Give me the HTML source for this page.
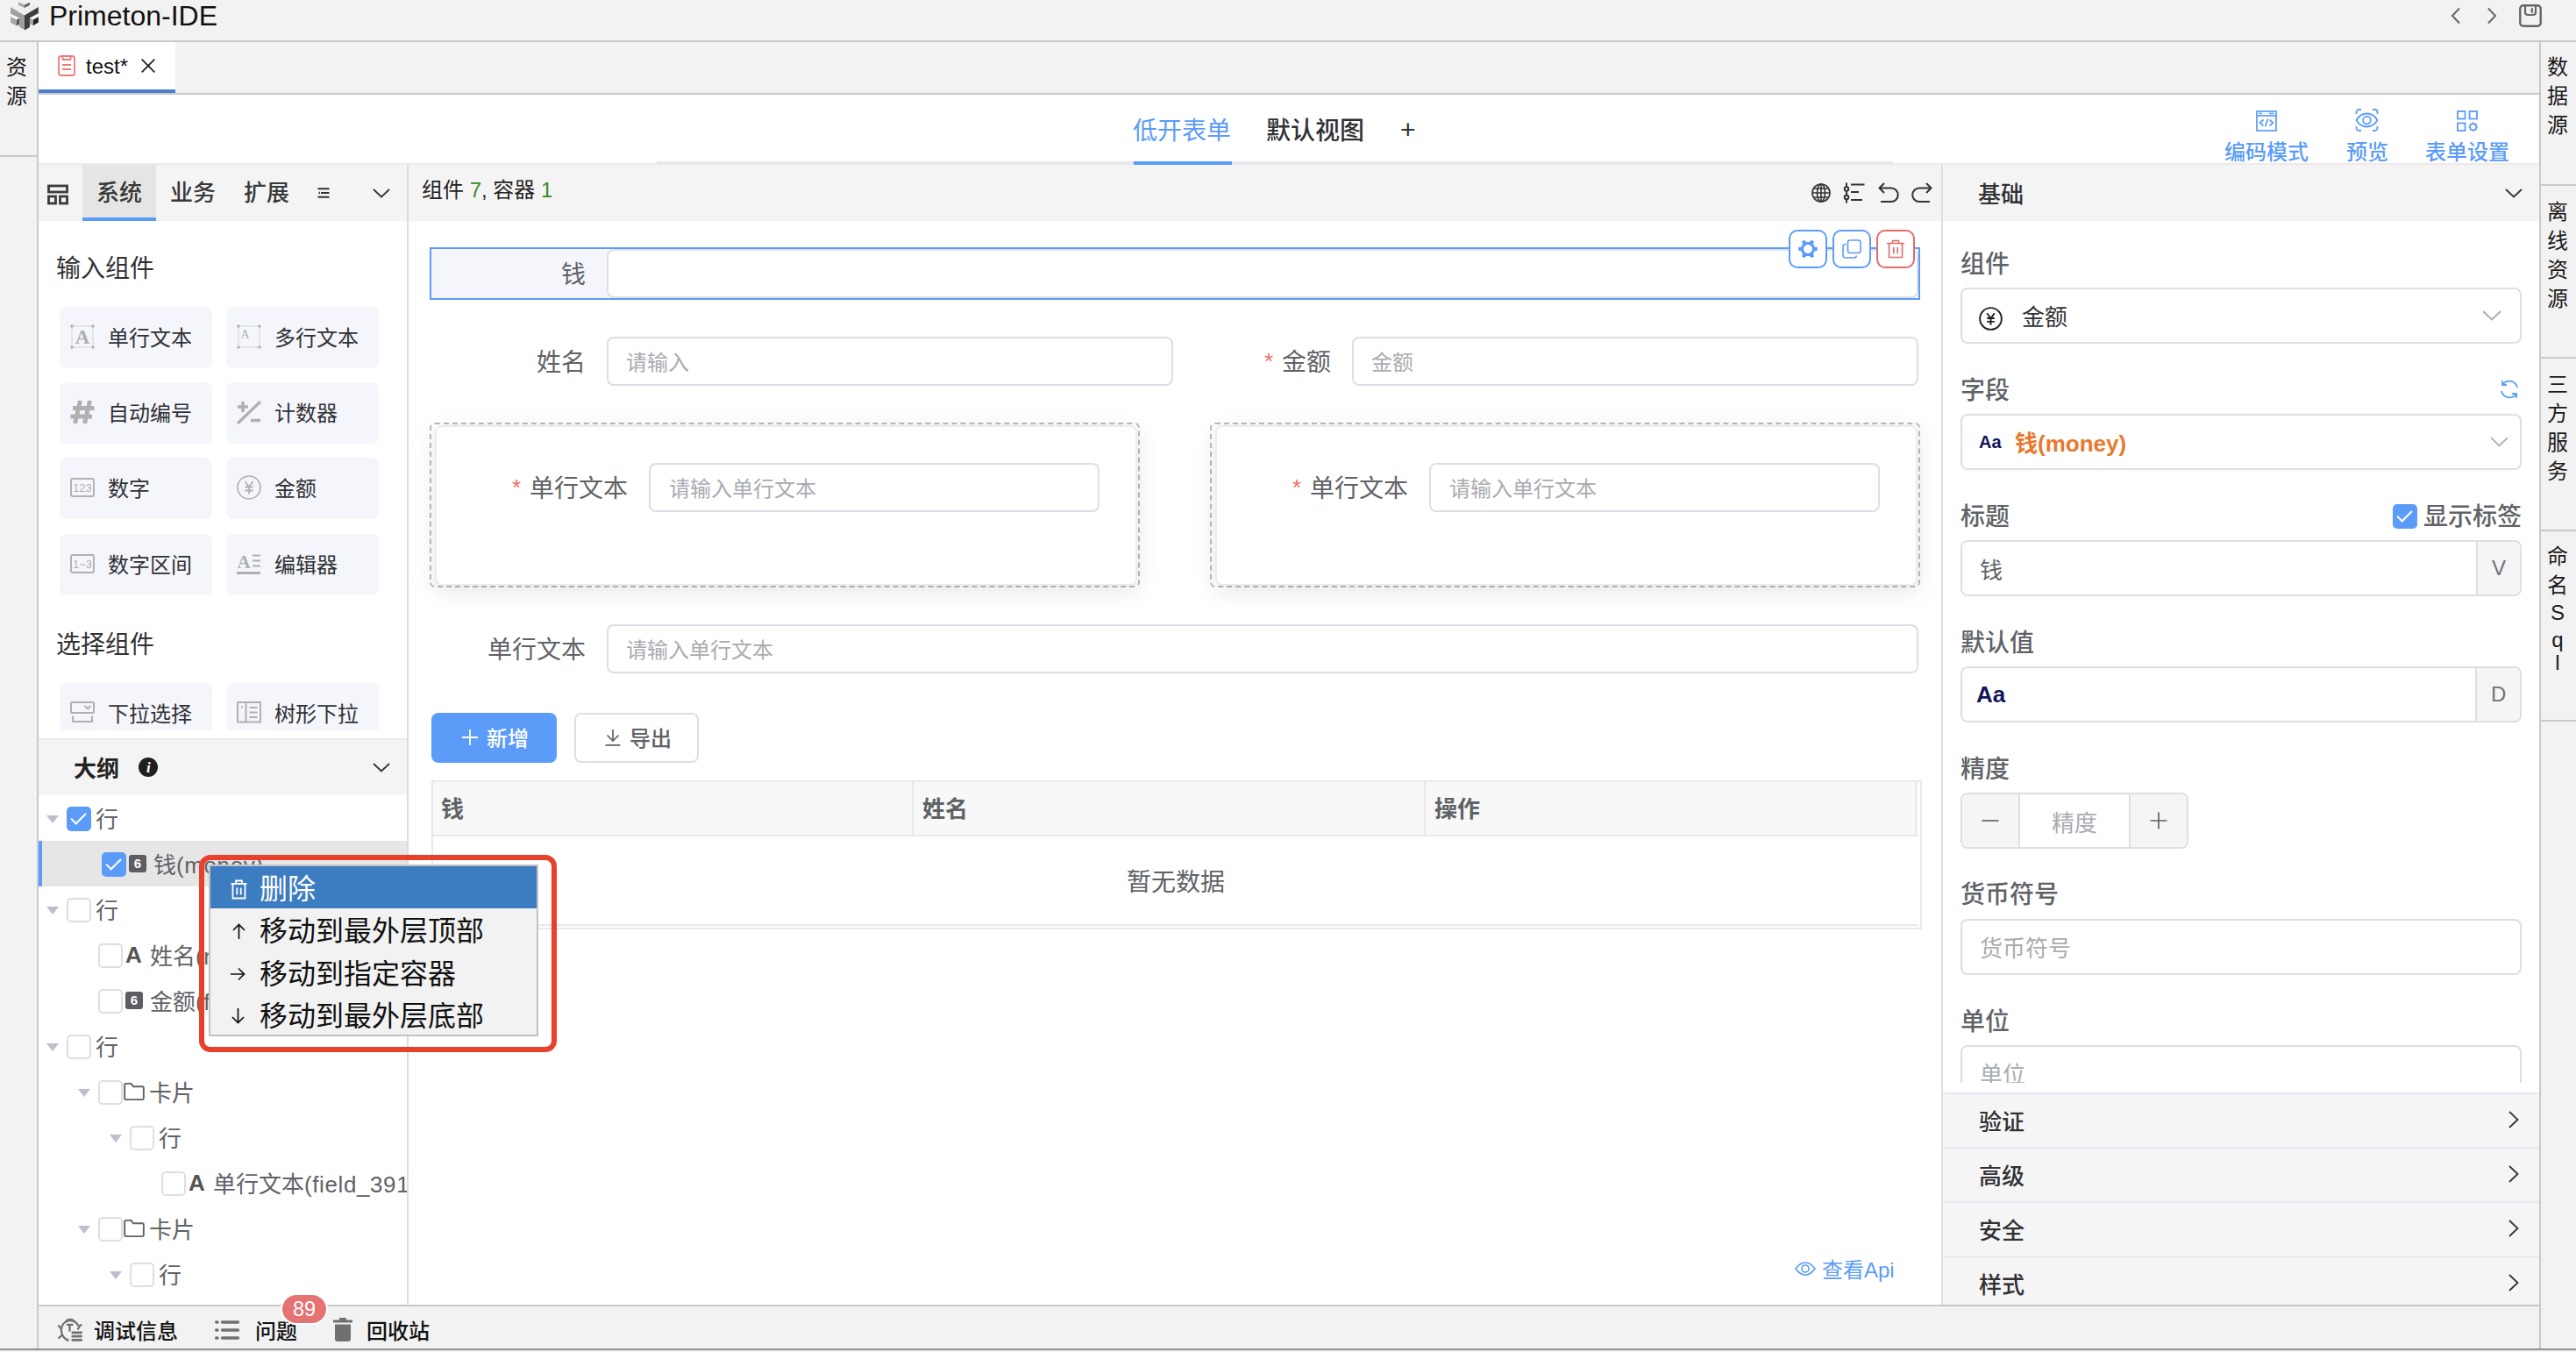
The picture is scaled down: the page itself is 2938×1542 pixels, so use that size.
<!DOCTYPE html>
<html lang="zh-CN">
<head>
<meta charset="utf-8">
<title>Primeton-IDE</title>
<style>
*{box-sizing:border-box;margin:0;padding:0}
html,body{width:2938px;height:1542px;overflow:hidden;background:#f2f2f2}
body{font-family:"Liberation Sans","Noto Sans CJK SC",sans-serif;color:#303133;position:relative}
.abs{position:absolute}
.t{position:absolute;white-space:nowrap;line-height:1}
.hl{position:absolute;height:2px;background:#c9c9c9}
.vl{position:absolute;width:2px;background:#c9c9c9}
svg{position:absolute;overflow:visible}
.cn{font-family:"Liberation Sans","Noto Sans CJK SC",sans-serif;margin-top:0.0895em}
.pc{position:absolute;width:174px;height:70px;background:#f5f6fc;border-radius:8px}
.pc .t{left:55px;top:22px;font-size:24px;color:#303133}
.pc svg{left:12px;top:20px;width:28px;height:28px}
.cb{position:absolute;width:28px;height:28px;border:2px solid #dcdfe6;border-radius:5px;background:#fff}
.cb.on{background:#5b9cf8;border-color:#5b9cf8}
.cb.on:after{content:"";position:absolute;left:7px;top:0.500px;width:7px;height:15px;border:solid #fff;border-width:0 2.200px 2.200px 0;transform:rotate(45deg)}
.tri{position:absolute;width:0;height:0;border-left:7px solid transparent;border-right:7px solid transparent;border-top:9px solid #bcbfcc}
.tr{position:absolute;font-size:26px;color:#606266;white-space:nowrap;line-height:1}
.ic6{position:absolute;width:20px;height:20px;border-radius:3px;background:#5d5d61;color:#fff;font-size:15px;font-weight:bold;line-height:20px;text-align:center}
.icA{position:absolute;font-size:26px;font-weight:bold;color:#555;line-height:1}
.inp{position:absolute;border:2px solid #dcdfe6;border-radius:8px;background:#fff}
.ph{position:absolute;white-space:nowrap;line-height:1;font-size:24px;color:#a9abb0}
.lb{position:absolute;white-space:nowrap;line-height:1;font-size:28px;color:#606266;margin-top:calc(0.0895em - 1px)}
.req{position:absolute;white-space:nowrap;line-height:1;font-size:26px;color:#f56c6c}
.rl{position:absolute;white-space:nowrap;line-height:1;font-size:28px;color:#606266;font-weight:500;margin-top:calc(0.0895em - 1px)}
.sec{position:absolute;left:2216px;width:680px;height:62px;background:#f5f5f5;border-top:2px solid #e7e9f2}
.sec .t{left:41px;top:17px;font-size:26px;font-weight:500;color:#303133}
.vt{position:absolute;margin-top:calc(0.0895em - 1px);width:42px;text-align:center;font-size:24px;line-height:33px;color:#1a1a1a}
.lt{letter-spacing:0.600px}
.mi{position:absolute;left:296px;font-size:32px;line-height:1;color:#111;white-space:nowrap}
</style>
</head>
<body>
<!-- title bar -->
<div class="abs" style="left:0;top:0;width:2938px;height:46px;background:#f2f2f2"></div>
<div class="hl" style="left:0;top:46px;width:2938px"></div>
<svg style="left:6px;top:0px;width:44px;height:40px" viewBox="0 0 1487 1352">
<polygon points="200,280 740,30 1280,270 740,590" fill="#eeeeee"/>
<polygon points="510,75 740,195 740,300 510,185" fill="#a2a2a2"/>
<polygon points="740,195 945,95 945,195 740,300" fill="#5a5a5a"/>
<polygon points="205,280 740,590 740,1150 540,1040 540,700 205,520" fill="#a0a0a0"/>
<polygon points="740,590 1280,270 1280,510 945,690 945,1050 740,1170" fill="#3e3e3e"/>
<polygon points="205,645 330,590 540,700 440,760" fill="#fafafa"/>
<polygon points="205,645 440,760 440,1000 205,870" fill="#a6a6a6"/>
<polygon points="440,760 540,700 540,935 440,1000" fill="#555555"/>
<polygon points="950,690 1150,600 1280,650 1075,760" fill="#fafafa"/>
<polygon points="950,690 1075,760 1075,990 950,930" fill="#a8a8a8"/>
<polygon points="1075,760 1280,650 1280,860 1075,985" fill="#242424"/>
</svg>
<div class="t" style="left:56px;top:0px;font-size:32px;line-height:36px;color:#111">Primeton-IDE</div>
<svg style="left:2794px;top:8px;width:14px;height:20px" viewBox="0 0 14 20"><path d="M11 1.5 L3 10 L11 18.5" fill="none" stroke="#666" stroke-width="2"/></svg>
<svg style="left:2835px;top:8px;width:14px;height:20px" viewBox="0 0 14 20"><path d="M3 1.5 L11 10 L3 18.5" fill="none" stroke="#666" stroke-width="2"/></svg>
<svg style="left:2873px;top:5px;width:26px;height:26px" viewBox="0 0 26 26"><rect x="1.3" y="1.3" width="23.4" height="23.4" rx="3.5" fill="none" stroke="#666" stroke-width="2.4"/><path d="M7 1.5 V9 a3 3 0 0 0 3 3 h6 a3 3 0 0 0 3 -3 V1.5" fill="none" stroke="#666" stroke-width="2.2"/><path d="M14.8 5.2 V8.8" stroke="#666" stroke-width="2.2" stroke-linecap="round"/></svg>

<!-- left strip -->
<div class="vl" style="left:42px;top:48px;height:1490px"></div>
<div class="vt cn" style="left:-2px;top:59px">资<br>源</div>
<div class="hl" style="left:0;top:177px;width:42px"></div>

<!-- right strip -->
<div class="vl" style="left:2896px;top:48px;height:1490px"></div>
<div class="vt cn" style="left:2896px;top:59px">数<br>据<br>源</div>
<div class="hl" style="left:2898px;top:210px;width:40px"></div>
<div class="vt cn" style="left:2896px;top:224px">离<br>线<br>资<br>源</div>
<div class="hl" style="left:2898px;top:407px;width:40px"></div>
<div class="vt cn" style="left:2896px;top:421px">三<br>方<br>服<br>务</div>
<div class="hl" style="left:2898px;top:604px;width:40px"></div>
<div class="vt cn" style="left:2896px;top:617px">命<br>名</div>
<div class="vt" style="left:2896px;top:684px;line-height:28px">S</div>
<div class="vt" style="left:2896px;top:715px;line-height:28px">q</div>
<div class="vt" style="left:2896px;top:741px;line-height:28px">l</div>
<div class="hl" style="left:2898px;top:821px;width:40px"></div>

<!-- tab bar -->
<div class="abs" style="left:44px;top:48px;width:156px;height:54px;background:#fff"></div>
<div class="abs" style="left:44px;top:102px;width:156px;height:4px;background:#4d80cc"></div>
<div class="hl" style="left:44px;top:106px;width:2852px"></div>
<svg style="left:66px;top:63px;width:20px;height:24px" viewBox="0 0 20 24"><rect x="1" y="1" width="18" height="22" rx="2.5" fill="none" stroke="#ee7b7b" stroke-width="1.8"/><path d="M5.5 1 V5 H14.5 V1" fill="none" stroke="#ee7b7b" stroke-width="1.8"/><path d="M5 11 H15 M5 16 H15" stroke="#ee7b7b" stroke-width="1.8"/></svg>
<div class="t" style="left:98px;top:62px;font-size:24px;line-height:28px;color:#111">test*</div>
<svg style="left:161px;top:67px;width:16px;height:16px" viewBox="0 0 16 16"><path d="M0.7 0.7 L15.3 15.3 M15.3 0.7 L0.7 15.3" stroke="#222" stroke-width="1.8"/></svg>

<!-- toolbar white -->
<div class="abs" style="left:44px;top:108px;width:2851px;height:78px;background:#fff"></div>
<div class="abs" style="left:44px;top:186px;width:2851px;height:2px;background:#f0e9ea"></div>
<div class="abs" style="left:749px;top:184px;width:1410px;height:4px;background:#e4e7ed"></div>
<div class="abs" style="left:1293px;top:184px;width:112px;height:4px;background:#5b9cf8"></div>
<div class="t cn" style="left:1292px;top:133px;font-size:28px;color:#5b9cf8">低开表单</div>
<div class="t cn" style="left:1444px;top:133px;font-size:28px;color:#303133;font-weight:500">默认视图</div>
<div class="t" style="left:1597px;top:133px;font-size:30px;color:#303133">+</div>

<svg style="left:2573px;top:126px;width:24px;height:24px" viewBox="0 0 24 24" fill="none" stroke="#5b9cf8" stroke-width="1.7"><rect x="1" y="1" width="22" height="22"/><path d="M1 6 H23"/><path d="M3.5 3.5 H7 M15 3.5 H20.5" stroke-width="1.3"/><path d="M8.5 10.5 L4.5 14 L8.5 17.5 M15.5 10.5 L19.5 14 L15.5 17.5 M13.5 9.5 L10.5 18.5"/></svg>
<div class="t cn" style="left:2537px;top:160px;font-size:24px;color:#5b9cf8;font-weight:500">编码模式</div>
<svg style="left:2686px;top:124px;width:27px;height:26px" viewBox="0 0 27 26" fill="none" stroke="#5b9cf8" stroke-width="1.8"><path d="M1.5 6 V4 a3 3 0 0 1 3 -3 H7 M20 1 h2.5 a3 3 0 0 1 3 3 V6 M25.500 20 v2 a3 3 0 0 1 -3 3 H20 M7 25 H4.500 a3 3 0 0 1 -3 -3 V20"/><path d="M1.500 13 C5 7 9 5.500 13.500 5.500 S22 7 25.500 13 C22 19 18 20.500 13.500 20.500 S5 19 1.500 13 Z"/><circle cx="13.500" cy="13" r="4.300"/></svg>
<div class="t cn" style="left:2676px;top:160px;font-size:24px;color:#5b9cf8;font-weight:500">预览</div>
<svg style="left:2802px;top:126px;width:24px;height:24px" viewBox="0 0 24 24" fill="none" stroke="#5b9cf8" stroke-width="1.8"><rect x="1" y="1" width="8.500" height="8.500"/><rect x="14.500" y="1" width="8.500" height="8.500"/><rect x="1" y="14.500" width="8.500" height="8.500"/><circle cx="18.700" cy="18.700" r="3.600"/><path d="M18.700 13.500 v1.600 M18.700 22.300 v1.600 M13.500 18.700 h1.600 M22.300 18.700 h1.600 M15 15 l1.100 1.100 M21.300 21.300 l1.100 1.100 M15 22.400 l1.100 -1.100 M21.300 16.100 l1.100 -1.100" stroke-width="1.500"/></svg>
<div class="t cn" style="left:2766px;top:160px;font-size:24px;color:#5b9cf8;font-weight:500">表单设置</div>

<div class="abs" style="left:44px;top:188px;width:2852px;height:64px;background:#f4f4f4"></div>
<div class="abs" style="left:44px;top:252px;width:2852px;height:1236px;background:#fff"></div>
<div class="vl" style="left:464px;top:188px;height:1300px;background:#dcdcdc"></div>
<div class="vl" style="left:2214px;top:188px;height:1300px;background:#dfdfe4"></div>

<!-- left panel header -->
<svg style="left:54px;top:210px;width:24px;height:24px" viewBox="0 0 24 24" fill="none" stroke="#3a3a3a" stroke-width="2.8"><rect x="1.5" y="2" width="21" height="7"/><rect x="1.5" y="14" width="8" height="8"/><rect x="14.500" y="14" width="8" height="8"/></svg>
<div class="abs" style="left:94px;top:188px;width:84px;height:60px;background:#e5e5e5"></div>
<div class="abs" style="left:94px;top:248px;width:84px;height:4px;background:#5b9cf8"></div>
<div class="t cn" style="left:110px;top:205px;font-size:26px;font-weight:500;color:#383838">系统</div>
<div class="t cn" style="left:194px;top:205px;font-size:26px;font-weight:500;color:#383838">业务</div>
<div class="t cn" style="left:278px;top:205px;font-size:26px;font-weight:500;color:#383838">扩展</div>
<svg style="left:362px;top:214px;width:14px;height:12px" viewBox="0 0 14 12" fill="none" stroke="#333" stroke-width="2"><path d="M0.5 1.2 H13.500 M4 6 H13.500 M0.5 10.800 H13.500"/><path d="M3 4.200 L0.8 6 L3 7.800 Z" fill="#444" stroke="none"/></svg>
<svg style="left:425px;top:215px;width:20px;height:11px" viewBox="0 0 20 11"><path d="M1 1 L10 9.500 L19 1" fill="none" stroke="#333" stroke-width="1.8"/></svg>
<div class="t cn" style="left:481px;top:203px;font-size:24px;color:#222">组件 <span style="color:#3b8a2a">7</span>, 容器 <span style="color:#3b8a2a">1</span></div>
<!-- palette -->
<div class="abs" style="left:44px;top:252px;width:420px;height:581px;overflow:hidden">
<div class="t cn" style="left:20px;top:38px;font-size:28px;color:#303133">输入组件</div>
<div class="t cn" style="left:20px;top:467px;font-size:28px;color:#303133">选择组件</div>
<div class="pc" style="left:24px;top:98px"><svg viewBox="0 0 28 28"><rect x="2" y="2" width="24" height="24" fill="none" stroke="#b0b0b0" stroke-width="1" stroke-dasharray="1.5 1.5"/><circle cx="2" cy="2" r="1.7" fill="#b0b0b0"/><circle cx="26" cy="2" r="1.7" fill="#b0b0b0"/><circle cx="2" cy="26" r="1.7" fill="#b0b0b0"/><circle cx="26" cy="26" r="1.7" fill="#b0b0b0"/><text x="14" y="22" text-anchor="middle" font-family="Liberation Serif,serif" font-size="23" font-weight="bold" fill="#b0b0b0">A</text></svg><div class="t cn">单行文本</div></div>
<div class="pc" style="left:214px;top:98px"><svg viewBox="0 0 28 28"><rect x="2" y="2" width="24" height="24" fill="none" stroke="#b0b0b0" stroke-width="1" stroke-dasharray="1.5 1.5"/><circle cx="2" cy="2" r="1.7" fill="#b0b0b0"/><circle cx="26" cy="2" r="1.7" fill="#b0b0b0"/><circle cx="2" cy="26" r="1.7" fill="#b0b0b0"/><circle cx="26" cy="26" r="1.7" fill="#b0b0b0"/><text x="9.500" y="16" text-anchor="middle" font-family="Liberation Serif,serif" font-size="14" fill="#b0b0b0">A</text></svg><div class="t cn">多行文本</div></div>
<div class="pc" style="left:24px;top:184px"><svg viewBox="0 0 28 28"><path d="M11.500 1 L5.500 27 M22.500 1 L16.500 27 M3 9.500 H27.500 M0.500 19 H25" fill="none" stroke="#b0b0b0" stroke-width="5"/></svg><div class="t cn">自动编号</div></div>
<div class="pc" style="left:214px;top:184px"><svg viewBox="0 0 28 28"><path d="M1 27 L27 2" stroke="#b0b0b0" stroke-width="3.200" fill="none"/><path d="M1 8 H13 M7 2 V14 M16 23.500 H27" stroke="#b0b0b0" stroke-width="3.600" fill="none"/></svg><div class="t cn">计数器</div></div>
<div class="pc" style="left:24px;top:270px"><svg viewBox="0 0 28 28"><rect x="1" y="4" width="26" height="20" rx="2" fill="none" stroke="#b0b0b0" stroke-width="1.9"/><text x="14" y="18.800" text-anchor="middle" font-family="Liberation Sans,sans-serif" font-size="13" fill="#b0b0b0">123</text></svg><div class="t cn">数字</div></div>
<div class="pc" style="left:214px;top:270px"><svg viewBox="0 0 28 28"><circle cx="14" cy="14" r="13" fill="none" stroke="#b0b0b0" stroke-width="1.6"/><path d="M9.500 7 L14 13.500 L18.500 7 M14 13.500 V21.500 M9.500 13.500 H18.500 M9.500 17.500 H18.500" fill="none" stroke="#b0b0b0" stroke-width="1.8"/></svg><div class="t cn">金额</div></div>
<div class="pc" style="left:24px;top:357px"><svg viewBox="0 0 28 28"><rect x="1" y="4" width="26" height="20" rx="2" fill="none" stroke="#b0b0b0" stroke-width="1.9"/><text x="14" y="18.800" text-anchor="middle" font-family="Liberation Sans,sans-serif" font-size="13" fill="#b0b0b0">1~3</text></svg><div class="t cn">数字区间</div></div>
<div class="pc" style="left:214px;top:357px"><svg viewBox="0 0 28 28"><text x="8" y="18.500" text-anchor="middle" font-family="Liberation Serif,serif" font-size="21" font-weight="bold" fill="#b0b0b0">A</text><path d="M18 4.500 H27 M18 10.500 H27 M18 16.500 H27" stroke="#b0b0b0" stroke-width="2" fill="none"/><path d="M0 24.500 H27" stroke="#b0b0b0" stroke-width="3" fill="none"/></svg><div class="t cn">编辑器</div></div>
<div class="pc" style="left:24px;top:527px"><svg viewBox="0 0 28 28"><rect x="1" y="2" width="26" height="12" rx="1" fill="none" stroke="#b0b0b0" stroke-width="2"/><path d="M16.500 6 L20 9.500 L23.500 6" fill="none" stroke="#b0b0b0" stroke-width="1.8"/><path d="M3 17.500 V24 H25 V17.500" fill="none" stroke="#b0b0b0" stroke-width="2"/></svg><div class="t cn">下拉选择</div></div>
<div class="pc" style="left:214px;top:527px"><svg viewBox="0 0 28 28"><rect x="1" y="2" width="26" height="22.500" fill="none" stroke="#b0b0b0" stroke-width="2"/><path d="M10.500 2 V24.500 M14.500 8 H23.500 M14.500 13.500 H23.500 M14.500 19 H23.500" fill="none" stroke="#b0b0b0" stroke-width="2"/><path d="M5 5.500 L7.500 7.300 L5 9 Z" fill="#b0b0b0"/></svg><div class="t cn">树形下拉</div></div>
</div>
<!-- outline header -->
<div class="abs" style="left:44px;top:842px;width:420px;height:65px;background:#f4f4f4;border-top:2px solid #e9eaf2"></div>
<div class="t cn" style="left:84px;top:862px;font-size:26px;font-weight:bold;color:#222">大纲</div>
<svg style="left:158px;top:864px;width:22px;height:22px" viewBox="0 0 22 22"><circle cx="11" cy="11" r="11" fill="#1f1f1f"/><text x="11.300" y="17" text-anchor="middle" font-family="Liberation Serif,serif" font-size="17" font-weight="bold" font-style="italic" fill="#fff">i</text></svg>
<svg style="left:425px;top:870px;width:20px;height:11px" viewBox="0 0 20 11"><path d="M1 1 L10 9.500 L19 1" fill="none" stroke="#333" stroke-width="1.8"/></svg>
<!-- tree -->
<div class="abs" style="left:44px;top:907px;width:420px;height:581px;overflow:hidden">
<div class="tri" style="left:9px;top:23px"></div>
<div class="cb on" style="left:32px;top:13px"></div>
<div class="tr cn" style="left:65px;top:13px">行</div>
<div class="abs" style="left:0;top:52px;width:420px;height:52px;background:#e6e6e6;border-left:4px solid #5b9cf8"></div>
<div class="cb on" style="left:72px;top:65px"></div>
<div class="ic6" style="left:103px;top:68px">6</div>
<div class="tr cn" style="left:131px;top:65px">钱<span class="lt">(money)</span></div>
<div class="tri" style="left:9px;top:127px"></div>
<div class="cb" style="left:32px;top:117px"></div>
<div class="tr cn" style="left:65px;top:117px">行</div>
<div class="cb" style="left:68px;top:169px"></div>
<div class="icA" style="left:99px;top:169px">A</div>
<div class="tr cn" style="left:127px;top:169px">姓名<span class="lt">(name)</span></div>
<div class="cb" style="left:68px;top:221px"></div>
<div class="ic6" style="left:99px;top:224px">6</div>
<div class="tr cn" style="left:127px;top:221px">金额<span class="lt">(field_8813)</span></div>
<div class="tri" style="left:9px;top:283px"></div>
<div class="cb" style="left:32px;top:273px"></div>
<div class="tr cn" style="left:65px;top:273px">行</div>
<div class="tri" style="left:45px;top:335px"></div>
<div class="cb" style="left:68px;top:325px"></div>
<svg style="left:97px;top:327px;width:24px;height:22px" viewBox="0 0 25 22"><path d="M1.200 3 a1.500 1.500 0 0 1 1.500 -1.500 H9 L11.500 5 H22.300 a1.500 1.500 0 0 1 1.500 1.500 V19 a1.500 1.500 0 0 1 -1.500 1.500 H2.700 a1.500 1.500 0 0 1 -1.500 -1.500 Z" fill="none" stroke="#606266" stroke-width="2"/></svg>
<div class="tr cn" style="left:126px;top:325px">卡片</div>
<div class="tri" style="left:81px;top:387px"></div>
<div class="cb" style="left:104px;top:377px"></div>
<div class="tr cn" style="left:137px;top:377px">行</div>
<div class="cb" style="left:140px;top:429px"></div>
<div class="icA" style="left:171px;top:429px">A</div>
<div class="tr cn" style="left:199px;top:429px">单行文本<span class="lt">(field_3915)</span></div>
<div class="tri" style="left:45px;top:491px"></div>
<div class="cb" style="left:68px;top:481px"></div>
<svg style="left:97px;top:483px;width:24px;height:22px" viewBox="0 0 25 22"><path d="M1.200 3 a1.500 1.500 0 0 1 1.500 -1.500 H9 L11.500 5 H22.300 a1.500 1.500 0 0 1 1.500 1.500 V19 a1.500 1.500 0 0 1 -1.500 1.500 H2.700 a1.500 1.500 0 0 1 -1.500 -1.500 Z" fill="none" stroke="#606266" stroke-width="2"/></svg>
<div class="tr cn" style="left:126px;top:481px">卡片</div>
<div class="tri" style="left:81px;top:543px"></div>
<div class="cb" style="left:104px;top:533px"></div>
<div class="tr cn" style="left:137px;top:533px">行</div>
</div>
<!-- canvas header icons -->
<svg style="left:2066px;top:209px;width:22px;height:22px" viewBox="0 0 22 22" fill="none" stroke="#333" stroke-width="1.6"><circle cx="11" cy="11" r="10"/><ellipse cx="11" cy="11" rx="4.500" ry="10"/><path d="M11 1 V21 M1 11 H21 M2.500 6 H19.500 M2.500 16 H19.500"/></svg>
<svg style="left:2102px;top:208px;width:25px;height:24px" viewBox="0 0 25 24" fill="none" stroke="#333" stroke-width="2"><path d="M4 0.500 V23.500"/><circle cx="4" cy="7.500" r="2.300" fill="#f4f4f4"/><circle cx="4" cy="17" r="2.300" fill="#f4f4f4"/><path d="M9 2.500 H24.500 M9 11 H18 M9 20 H22"/></svg>
<svg style="left:2142px;top:208px;width:24px;height:24px" viewBox="0 0 24 24" fill="none" stroke="#333" stroke-width="2"><path d="M7 1 L1.500 6.500 L7 12 M1.500 6.500 H15 a7.500 7.500 0 0 1 0 15.500 H3"/></svg>
<svg style="left:2180px;top:208px;width:24px;height:24px" viewBox="0 0 24 24" fill="none" stroke="#333" stroke-width="2"><path d="M17 1 L22.500 6.500 L17 12 M22.500 6.500 H9 a7.500 7.500 0 0 0 0 15.500 H21"/></svg>
<!-- selected row -->
<div class="abs" style="left:490px;top:282px;width:1700px;height:60px;border:2px solid #5b9cf8;background:#f5f6fc"></div>
<div class="lb cn" style="left:640px;top:298px">钱</div>
<div class="inp" style="left:692px;top:284px;width:1496px;height:56px"></div>
<div class="abs" style="left:2040px;top:262px;width:44px;height:44px;border:2px solid #5b9cf8;border-radius:10px;background:#fff"></div>
<div class="abs" style="left:2090px;top:262px;width:44px;height:44px;border:2px solid #5b9cf8;border-radius:10px;background:#fff"></div>
<div class="abs" style="left:2140px;top:262px;width:44px;height:44px;border:2px solid #e26a6a;border-radius:10px;background:#fff"></div>
<svg style="left:2051px;top:273px;width:22px;height:22px" viewBox="0 0 22 22"><path fill-rule="evenodd" d="M21.83,9.05 L21.83,12.95 L18.87,13.29 L16.92,16.68 L18.10,19.40 L14.73,21.35 L12.96,18.96 L9.04,18.96 L7.27,21.35 L3.90,19.40 L5.08,16.68 L3.13,13.29 L0.17,12.95 L0.17,9.05 L3.13,8.71 L5.08,5.32 L3.90,2.60 L7.27,0.65 L9.04,3.04 L12.96,3.04 L14.73,0.65 L18.10,2.60 L16.92,5.32 L18.87,8.71 Z M11 6 a5 5 0 1 0 0.010 0 Z" fill="#5b9cf8"/></svg>
<svg style="left:2101px;top:273px;width:22px;height:22px" viewBox="0 0 22 22" fill="none" stroke="#5b9cf8" stroke-width="1.6"><rect x="6.500" y="1" width="14.500" height="14.500" rx="2.500"/><path d="M4.500 5.500 H4 a3 3 0 0 0 -3 3 V18 a3 3 0 0 0 3 3 h9.500 a3 3 0 0 0 3 -2.500"/></svg>
<svg style="left:2151px;top:273px;width:22px;height:22px" viewBox="0 0 22 22" fill="none" stroke="#e26a6a" stroke-width="1.6"><path d="M1 4.500 H21 M7.500 4.500 V1.500 H14.500 V4.500 M3.500 4.500 V20.500 H18.500 V4.500 M8.800 9 V16.500 M13.200 9 V16.500"/></svg>
<!-- row 2 -->
<div class="lb cn" style="left:612px;top:398px">姓名</div>
<div class="inp" style="left:692px;top:384px;width:1646px;height:56px;width:646px"></div>
<div class="ph cn" style="left:714px;top:400px">请输入</div>
<div class="req" style="left:1442px;top:399px">*</div>
<div class="lb cn" style="left:1462px;top:398px">金额</div>
<div class="inp" style="left:1542px;top:384px;width:646px;height:56px"></div>
<div class="ph cn" style="left:1564px;top:400px">金额</div>
<!-- cards -->
<div class="abs" style="left:490px;top:482px;width:810px;height:188px;border:2px dashed #bbbbbb;border-radius:6px"></div>
<div class="abs" style="left:496px;top:485px;width:801px;height:183px;border:2px solid #ebebf2;border-radius:8px;background:#fff;box-shadow:0 6px 28px rgba(0,0,0,0.10)"></div>
<div class="req" style="left:584px;top:543px">*</div>
<div class="lb cn" style="left:604px;top:542px">单行文本</div>
<div class="inp" style="left:740px;top:528px;width:514px;height:56px"></div>
<div class="ph cn" style="left:763px;top:544px">请输入单行文本</div>
<div class="abs" style="left:1380px;top:482px;width:810px;height:188px;border:2px dashed #bbbbbb;border-radius:6px"></div>
<div class="abs" style="left:1386px;top:485px;width:801px;height:183px;border:2px solid #ebebf2;border-radius:8px;background:#fff;box-shadow:0 6px 28px rgba(0,0,0,0.10)"></div>
<div class="req" style="left:1474px;top:543px">*</div>
<div class="lb cn" style="left:1494px;top:542px">单行文本</div>
<div class="inp" style="left:1630px;top:528px;width:514px;height:56px"></div>
<div class="ph cn" style="left:1653px;top:544px">请输入单行文本</div>
<!-- row 单行文本 -->
<div class="lb cn" style="left:556px;top:726px">单行文本</div>
<div class="inp" style="left:692px;top:712px;width:1496px;height:56px"></div>
<div class="ph cn" style="left:714px;top:728px">请输入单行文本</div>
<!-- buttons -->
<div class="abs" style="left:492px;top:813px;width:143px;height:57px;background:#5b9cf8;border-radius:8px"></div>
<svg style="left:526px;top:831px;width:20px;height:20px" viewBox="0 0 20 20"><path d="M10 1 V19 M1 10 H19" stroke="#fff" stroke-width="1.8" fill="none"/></svg>
<div class="t cn" style="left:555px;top:829px;font-size:24px;font-weight:500;color:#fff">新增</div>
<div class="abs" style="left:655px;top:813px;width:142px;height:57px;background:#fff;border:2px solid #dcdfe6;border-radius:8px"></div>
<svg style="left:690px;top:831px;width:18px;height:20px" viewBox="0 0 18 20" fill="none" stroke="#606266" stroke-width="1.7"><path d="M9 1 V14 M2.500 7.500 L9 14 L15.500 7.500 M0.500 18.800 H17.500"/></svg>
<div class="t cn" style="left:718px;top:829px;font-size:24px;font-weight:500;color:#606266">导出</div>
<!-- table -->
<div class="abs" style="left:492px;top:890px;width:1700px;height:170px;border:2px solid #e8e9ed"></div>
<div class="abs" style="left:494px;top:892px;width:1694px;height:62px;background:#f8f8f9;border-bottom:2px solid #e8e9ed"></div>
<div class="abs" style="left:1040px;top:892px;width:2px;height:60px;background:#e8e9ed"></div>
<div class="abs" style="left:1624px;top:892px;width:2px;height:60px;background:#e8e9ed"></div>
<div class="abs" style="left:2184px;top:892px;width:2px;height:62px;background:#e8e9ed"></div>
<div class="abs" style="left:494px;top:1054px;width:1694px;height:2px;background:#e8e9ed"></div>
<div class="t cn" style="left:503px;top:908px;font-size:26px;font-weight:bold;color:#606266">钱</div>
<div class="t cn" style="left:1052px;top:908px;font-size:26px;font-weight:bold;color:#606266">姓名</div>
<div class="t cn" style="left:1636px;top:908px;font-size:26px;font-weight:bold;color:#606266">操作</div>
<div class="t cn" style="left:1285px;top:990px;font-size:28px;color:#606266">暂无数据</div>
<!-- api link -->
<svg style="left:2047px;top:1437px;width:24px;height:20px" viewBox="0 0 24 20" fill="none" stroke="#5b9cf8" stroke-width="1.6"><path d="M1 10 C4.500 5 8 3 12 3 S19.500 5 23 10 C19.500 15 16 17 12 17 S4.500 15 1 10 Z"/><circle cx="12" cy="10" r="4"/></svg>
<div class="t cn" style="left:2078px;top:1435px;font-size:24px;color:#5b9cf8">查看Api</div>
<!-- right panel -->
<div class="t cn" style="left:2256px;top:207px;font-size:26px;font-weight:500;color:#303133">基础</div>
<svg style="left:2857px;top:215px;width:20px;height:11px" viewBox="0 0 20 11"><path d="M1 1 L10 9.500 L19 1" fill="none" stroke="#333" stroke-width="1.8"/></svg>
<div class="abs" style="left:2216px;top:252px;width:680px;height:983px;overflow:hidden">
<div class="rl cn" style="left:20px;top:34px">组件</div>
<div class="inp" style="left:20px;top:76px;width:640px;height:64px"></div>
<svg style="left:41px;top:98px;width:27px;height:27px" viewBox="0 0 28 28"><circle cx="14" cy="14" r="12.800" fill="none" stroke="#222" stroke-width="2"/><path d="M9.500 7.500 L14 13.500 L18.500 7.500 M14 13.500 V21.500 M9.500 13.500 H18.500 M9.500 17.500 H18.500" fill="none" stroke="#222" stroke-width="2"/></svg>
<div class="t cn" style="left:90px;top:95px;font-size:26px;color:#303133">金额</div>
<svg style="left:615px;top:102px;width:22px;height:12px" viewBox="0 0 22 12"><path d="M1 1 L11 10.500 L21 1" fill="none" stroke="#a8abb2" stroke-width="1.8"/></svg>
<div class="rl cn" style="left:20px;top:178px">字段</div>
<svg style="left:635px;top:181px;width:22px;height:22px" viewBox="0 0 22 22" fill="none" stroke="#5b9cf8" stroke-width="1.8"><path d="M20 9 A9.200 9.200 0 0 0 3.500 5.500 M2 13 A9.200 9.200 0 0 0 18.500 16.500"/><path d="M3 1 V6 H8 M19 21 V16 H14"/></svg>
<div class="inp" style="left:20px;top:220px;width:640px;height:64px"></div>
<div class="t cn" style="left:41px;top:240px;font-size:20px;font-weight:bold;color:#12155a">Aa</div>
<div class="t cn" style="left:82px;top:239px;font-size:26px;font-weight:bold;color:#e8792e">钱(money)</div>
<svg style="left:624px;top:246px;width:21px;height:12px" viewBox="0 0 22 12"><path d="M1 1 L11 10.500 L21 1" fill="none" stroke="#a8abb2" stroke-width="1.8"/></svg>
<div class="rl cn" style="left:20px;top:322px">标题</div>
<div class="cb on" style="left:513px;top:323px"></div>
<div class="t cn" style="left:548px;top:321px;font-size:28px;font-weight:500;color:#606266">显示标签</div>
<div class="inp" style="left:20px;top:364px;width:640px;height:64px;overflow:hidden"><div class="abs" style="right:0;top:0;width:50px;height:60px;background:#f5f5f6;border-left:2px solid #dcdfe6"></div></div>
<div class="t cn" style="left:42px;top:384px;font-size:26px;color:#606266">钱</div>
<div class="t" style="left:626px;top:384px;font-size:24px;color:#707378">V</div>
<div class="rl cn" style="left:20px;top:466px">默认值</div>
<div class="inp" style="left:20px;top:508px;width:640px;height:64px;overflow:hidden"><div class="abs" style="right:0;top:0;width:51px;height:60px;background:#f5f5f6;border-left:2px solid #dcdfe6"></div></div>
<div class="t cn" style="left:38px;top:525px;font-size:26px;font-weight:bold;color:#12155a">Aa</div>
<div class="t" style="left:625px;top:528px;font-size:24px;color:#707378">D</div>
<div class="rl cn" style="left:20px;top:610px">精度</div>
<div class="inp" style="left:20px;top:652px;width:260px;height:64px;overflow:hidden"><div class="abs" style="left:0;top:0;width:66px;height:60px;background:#f5f5f6;border-right:2px solid #dcdfe6"></div><div class="abs" style="right:0;top:0;width:66px;height:60px;background:#f5f5f6;border-left:2px solid #dcdfe6"></div></div>
<svg style="left:44px;top:674px;width:20px;height:20px" viewBox="0 0 20 20"><path d="M0.500 10 H19.500" stroke="#606266" stroke-width="1.7"/></svg>
<svg style="left:236px;top:674px;width:20px;height:20px" viewBox="0 0 20 20"><path d="M0.500 10 H19.500 M10 0.500 V19.500" stroke="#606266" stroke-width="1.7"/></svg>
<div class="ph cn" style="left:124px;top:672px;font-size:26px">精度</div>
<div class="rl cn" style="left:20px;top:753px">货币符号</div>
<div class="inp" style="left:20px;top:796px;width:640px;height:64px"></div>
<div class="ph cn" style="left:42px;top:815px;font-size:26px">货币符号</div>
<div class="rl cn" style="left:20px;top:898px">单位</div>
<div class="inp" style="left:20px;top:940px;width:640px;height:64px"></div>
<div class="ph cn" style="left:42px;top:959px;font-size:26px">单位</div>
</div>
<div class="sec" style="top:1246px;height:62px;overflow:hidden"><div class="t cn">验证</div><svg style="left:645px;top:19px;width:12px;height:20px" viewBox="0 0 12 20"><path d="M1 1 L10.500 10 L1 19" fill="none" stroke="#333" stroke-width="1.8"/></svg></div>
<div class="sec" style="top:1308px;height:62px;overflow:hidden"><div class="t cn">高级</div><svg style="left:645px;top:19px;width:12px;height:20px" viewBox="0 0 12 20"><path d="M1 1 L10.500 10 L1 19" fill="none" stroke="#333" stroke-width="1.8"/></svg></div>
<div class="sec" style="top:1370px;height:62px;overflow:hidden"><div class="t cn">安全</div><svg style="left:645px;top:19px;width:12px;height:20px" viewBox="0 0 12 20"><path d="M1 1 L10.500 10 L1 19" fill="none" stroke="#333" stroke-width="1.8"/></svg></div>
<div class="sec" style="top:1432px;height:56px;overflow:hidden"><div class="t cn">样式</div><svg style="left:645px;top:19px;width:12px;height:20px" viewBox="0 0 12 20"><path d="M1 1 L10.500 10 L1 19" fill="none" stroke="#333" stroke-width="1.8"/></svg></div>
<!-- bottom bar -->
<div class="abs" style="left:44px;top:1488px;width:2852px;height:50px;background:#f2f2f2"></div>
<div class="hl" style="left:44px;top:1488px;width:2852px;background:#c8c8c8"></div>
<div class="hl" style="left:0;top:1538px;width:2938px;background:#8f8f8f"></div>
<div class="abs" style="left:0;top:1540px;width:2938px;height:2px;background:#f2f2f2"></div>
<svg style="left:66px;top:1504px;width:28px;height:26px" viewBox="0 0 28 26" fill="none" stroke="#707070" stroke-width="2.300"><path d="M4.500 9.500 A10 10 0 0 1 23.500 8.500"/><path d="M8.500 4.500 A6 6 0 0 1 19.500 4.500"/><path d="M10 6.800 H17.500 M13.500 6.800 V14.500"/><path d="M4.500 9.500 C2.500 16 6 23 12.500 25"/><path d="M0.500 7.500 L4.500 12.500 M0.500 22.500 L5 18.500 M22.500 12.500 L25.500 7.500 L27.500 7"/><path d="M15.600 15.800 H27.700 M15.600 20.100 H27.700 M15.600 24.400 H27.700" stroke-width="2.700"/></svg>
<div class="t cn" style="left:107px;top:1505px;font-size:24px;font-weight:500;color:#111">调试信息</div>
<svg style="left:245px;top:1505px;width:28px;height:24px" viewBox="0 0 28 24" fill="none" stroke="#707070" stroke-width="3.400" stroke-linecap="round"><path d="M8.500 3 H26.500 M8.500 12 H26.500 M8.500 21 H26.500 M1.700 3 H3 M1.700 12 H3 M1.700 21 H3"/></svg>
<div class="t cn" style="left:291px;top:1505px;font-size:24px;font-weight:500;color:#111">问题</div>
<div class="abs" style="left:320px;top:1475px;width:54px;height:36px;border-radius:18px;background:#e57373;border:2px solid #fff;color:#fff;font-size:23.500px;line-height:32px;text-align:center">89</div>
<svg style="left:380px;top:1503px;width:22px;height:27px" viewBox="0 0 22 27"><path d="M7 0 H15 V2.500 H22 V5.500 H0 V2.500 H7 Z M2 7.500 H20 V24 a3 3 0 0 1 -3 3 H5 a3 3 0 0 1 -3 -3 Z" fill="#707070"/></svg>
<div class="t cn" style="left:418px;top:1505px;font-size:24px;font-weight:500;color:#111">回收站</div>
<!-- context menu -->
<div class="abs" style="left:227px;top:975px;width:408px;height:225px;border:6px solid #e8402a;border-radius:13px"></div>
<div class="abs" style="left:238px;top:986px;width:376px;height:196px;background:#f2f2f2;border:2px solid #c2c2c2"></div>
<div class="abs" style="left:240px;top:988px;width:372px;height:48px;background:#3c7cc0"></div>
<svg style="left:263px;top:1003px;width:19px;height:23px" viewBox="0 0 19 23" fill="none" stroke="#fff" stroke-width="1.8"><path d="M0.500 5 H18.500 M6 5 V1.500 H13 V5 M2.500 5 V21.500 H16.500 V5 M7.300 9.500 V17.500 M11.700 9.500 V17.500"/></svg>
<div class="mi cn" style="top:995px;color:#fff">删除</div>
<svg style="left:265px;top:1053px;width:15px;height:18px" viewBox="0 0 15 18" fill="none" stroke="#111" stroke-width="1.7"><path d="M7.500 18 V1.500 M1 8 L7.500 1.500 L14 8"/></svg>
<div class="mi cn" style="top:1043px">移动到最外层顶部</div>
<svg style="left:263px;top:1103px;width:17px;height:16px" viewBox="0 0 17 16" fill="none" stroke="#111" stroke-width="1.7"><path d="M0 8 H15.500 M9 1.500 L15.500 8 L9 14.500"/></svg>
<div class="mi cn" style="top:1092px">移动到指定容器</div>
<svg style="left:264px;top:1150px;width:15px;height:18px" viewBox="0 0 15 18" fill="none" stroke="#111" stroke-width="1.7"><path d="M7.500 0 V16.500 M1 10 L7.500 16.500 L14 10"/></svg>
<div class="mi cn" style="top:1140px">移动到最外层底部</div>
</body>
</html>
